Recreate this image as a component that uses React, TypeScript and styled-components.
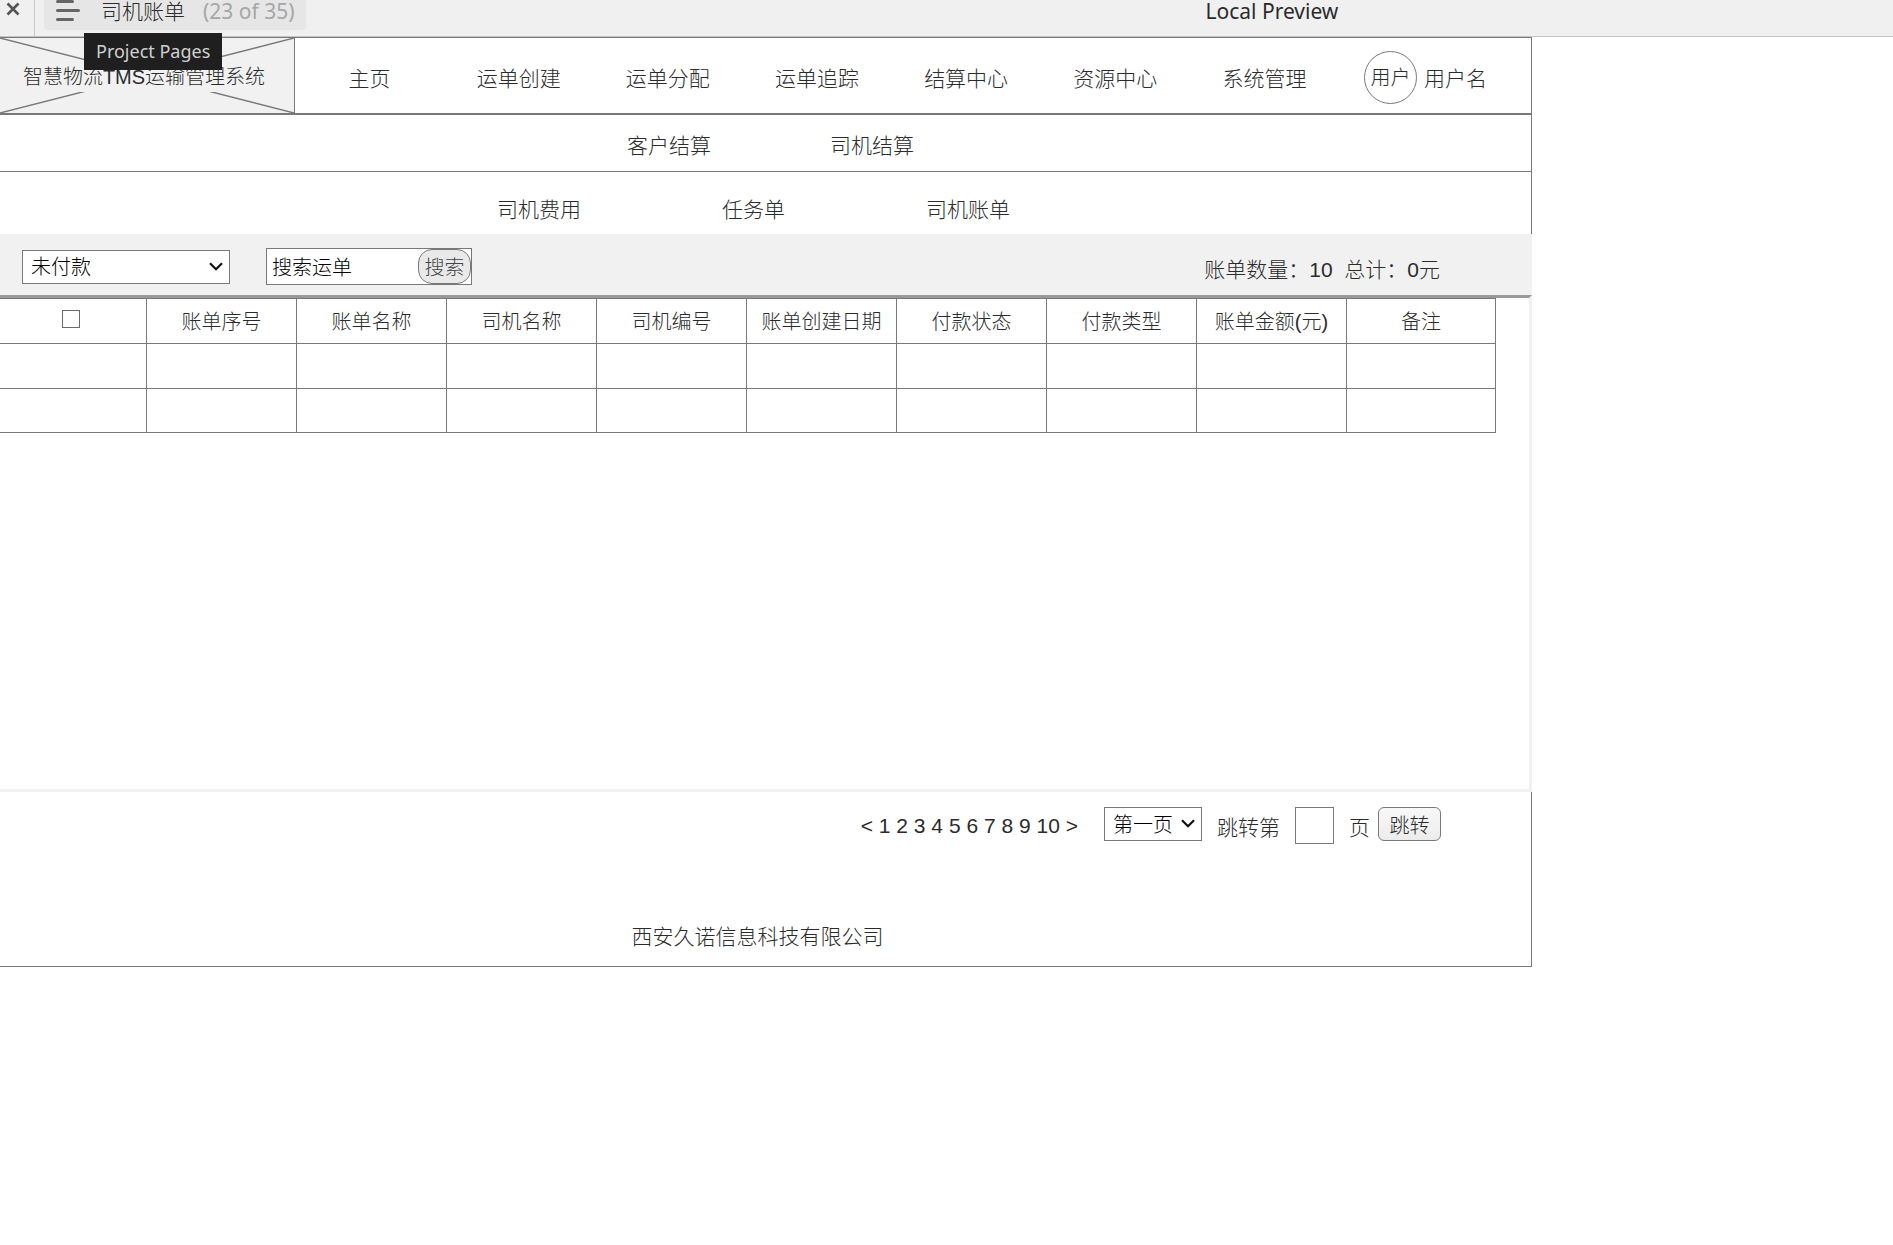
import React from "react";
import styled, { createGlobalStyle } from "styled-components";

const line = "#797979";
const ink = "#2b2b2b";
const panel = "#f1f1f1";

const GlobalStyle = createGlobalStyle`
  *, *::before, *::after { box-sizing: border-box; }
  body {
    margin: 0;
    background: #ffffff;
    color: ${ink};
    font-family: "Liberation Sans", "Noto Sans CJK SC", sans-serif;
    font-weight: 300;
    font-size: 21px;
    line-height: 30px;
  }
  a { color: inherit; text-decoration: none; }
  button, input, select { font: inherit; margin: 0; }
`;

/* Preview player bar */

const PlayerBar = styled.div`
  display: flex;
  align-items: flex-start;
  height: 37px;
  background: #f0f0f0;
  border-bottom: 1px solid #c4c4c4;
  font-family: "Noto Sans", "Noto Sans CJK SC", sans-serif;
  line-height: 22px;
`;

const CloseButton = styled.button`
  width: 35px;
  height: 36px;
  padding: 2px 0 0 6px;
  border: 0;
  border-right: 1px solid #c8c8c8;
  background: none;
  display: flex;
  align-items: flex-start;
`;

const PagesButton = styled.button`
  position: relative;
  display: flex;
  align-items: flex-start;
  height: 30px;
  margin-left: 9px;
  padding: 0 11px 0 12px;
  border: 0;
  border-radius: 0 0 4px 4px;
  background: #e6e6e6;
  color: ${ink};
  white-space: nowrap;
`;

const PageName = styled.span`
  margin-left: 20px;
`;

const PageCount = styled.span`
  margin-left: 18px;
  color: #a6a6a6;
  font-weight: 400;
`;

const Tooltip = styled.span`
  position: absolute;
  z-index: 2;
  top: 33px;
  left: 40px;
  height: 37px;
  padding: 0 12px;
  background: #1f1f1f;
  color: #d0d0d0;
  font-size: 18px;
  font-weight: 400;
  line-height: 37px;
`;

const PlayerTitle = styled.div`
  flex: 1;
  padding-left: 900px;
  font-weight: 400;
`;

/* Page frame */

const Page = styled.div`
  max-width: 1532px;
`;

const Header = styled.header`
  display: flex;
  height: 78px;
  border: solid ${line};
  border-width: 1px 1px 2px 0;
`;

const Logo = styled.div`
  position: relative;
  display: flex;
  align-items: center;
  justify-content: center;
  flex: 0 0 295px;
  padding: 2px 6px 0 0;
  background: ${panel};
  border-right: 1px solid ${line};
`;

const LogoCross = styled.svg`
  position: absolute;
  inset: 0;
  width: 100%;
  height: 100%;
`;

const LogoText = styled.h1`
  position: relative;
  margin: 0;
  background: ${panel};
  font-size: 20px;
  font-weight: 300;
  line-height: 30px;
  white-space: nowrap;
`;

const MainNav = styled.nav`
  display: grid;
  grid-template-columns: repeat(7, 1fr);
  flex: 1;
  align-items: center;
  padding: 6px 2px 0 0;
  text-align: center;
  white-space: nowrap;
`;

const User = styled.div`
  display: flex;
  align-items: center;
  flex: 0 0 190px;
  gap: 7px;
  padding: 3px 0 0 23px;
  white-space: nowrap;
`;

const Avatar = styled.span`
  display: flex;
  align-items: center;
  justify-content: center;
  width: 53px;
  height: 53px;
  padding-top: 2px;
  border: 1px solid ${line};
  border-radius: 50%;
  font-size: 20px;
`;

const UserName = styled.span`
  padding-top: 3px;
`;

const SubNav = styled.nav<{ $level: 2 | 3 }>`
  display: flex;
  justify-content: center;
  gap: ${(p) => (p.$level === 2 ? 119 : 141)}px;
  padding: ${(p) => (p.$level === 2 ? "16px 0 10px 10px" : "23px 24px 9px 0")};
  border-right: 1px solid ${line};
  border-bottom: ${(p) => (p.$level === 2 ? `1px solid ${line}` : "0")};
`;

const FilterBar = styled.form`
  display: flex;
  align-items: center;
  height: 61px;
  padding: 4px 92px 0 22px;
  background: ${panel};
`;

const SelectBox = styled.span<{ $width: number }>`
  position: relative;
  display: flex;
  width: ${(p) => p.$width}px;
  height: 34px;
`;

const Select = styled.select`
  width: 100%;
  padding: 1px 8px 0;
  border: 1px solid ${line};
  border-radius: 0;
  background: #ffffff;
  color: #000000;
  font-size: 20px;
  line-height: 30px;
  appearance: none;
`;

const Chevron = styled.svg`
  position: absolute;
  top: 12px;
  right: 7px;
  width: 14px;
  height: 9px;
  pointer-events: none;
`;

const SearchBox = styled.div`
  display: flex;
  width: 206px;
  height: 37px;
  margin-left: 36px;
  border: 1px solid ${line};
  background: #ffffff;
`;

const SearchInput = styled.input`
  flex: 1;
  min-width: 0;
  padding: 2px 5px 0;
  border: 0;
  background: none;
  color: #000000;
  font-size: 20px;
`;

const Button = styled.button<{ $round?: boolean }>`
  width: ${(p) => (p.$round ? 53 : 63)}px;
  height: ${(p) => (p.$round ? 35 : 34)}px;
  padding: 3px 0 0;
  border: 1px solid ${line};
  border-radius: ${(p) => (p.$round ? 14 : 6)}px;
  background: ${(p) => (p.$round ? "#e9e9e9" : "linear-gradient(#f8f8f8, #ececec)")};
  color: ${(p) => (p.$round ? "#444444" : ink)};
  font-size: 20px;
  line-height: 28px;
`;

const Summary = styled.p`
  margin: 0 0 0 auto;
  padding-top: 6px;
  white-space: pre;
`;

const TablePanel = styled.section`
  min-height: 497px;
  border: solid ${panel};
  border-width: 3px 3px 3px 0;
  border-top-color: #999999;
`;

const Table = styled.table`
  width: calc(100% - 33px);
  table-layout: fixed;
  border-spacing: 0;
  border-top: 1px solid ${line};
  font-size: 20px;

  th, td {
    height: 45px;
    padding: 2px 0 0;
    border: solid ${line};
    border-width: 0 1px 1px 0;
    font-weight: 300;
    text-align: center;
    white-space: nowrap;
  }
  th:first-child { width: 147px; padding: 0 4px 4px 0; }
  th:last-child { width: 149px; }
  tbody tr:last-child td { height: 44px; }
`;

const Checkbox = styled.input`
  display: block;
  width: 18px;
  height: 18px;
  margin: 0 auto;
  border: 1px solid #6b6b6b;
  background: #ffffff;
  appearance: none;

  &:checked { background: ${line}; }
`;

const Footer = styled.footer`
  height: 175px;
  border: solid ${line};
  border-width: 0 1px 1px 0;
`;

const Pager = styled.form`
  display: flex;
  align-items: flex-start;
  justify-content: flex-end;
  padding: 15px 90px 0 0;
  white-space: nowrap;
`;

const PageLinks = styled.nav`
  margin-right: 26px;
  line-height: 38px;
`;

const PageLabel = styled.label`
  display: flex;
  align-items: flex-start;
  gap: 15px;
  margin: 0 8px 0 15px;
  line-height: 42px;
`;

const PageInput = styled.input`
  width: 39px;
  height: 37px;
  padding: 0 4px;
  border: 1px solid ${line};
  background: #ffffff;
`;

const Company = styled.p`
  margin: 73px 16px 0 0;
  text-align: center;
`;

const mainMenu = ["主页", "运单创建", "运单分配", "运单追踪", "结算中心", "资源中心", "系统管理"];
const settleMenu = ["客户结算", "司机结算"];
const driverMenu = ["司机费用", "任务单", "司机账单"];
const columns = ["账单序号", "账单名称", "司机名称", "司机编号", "账单创建日期", "付款状态", "付款类型", "账单金额(元)", "备注"];
const pages = ["<", "1", "2", "3", "4", "5", "6", "7", "8", "9", "10", ">"];

const links = (items: string[]) => items.map((t) => <a href="#" key={t}>{t}</a>);

function Dropdown({ label, option, width }: { label: string; option: string; width: number }) {
  return (
    <SelectBox $width={width}>
      <Select aria-label={label}>
        <option>{option}</option>
      </Select>
      <Chevron viewBox="0 0 14 9" fill="none" stroke="#111" strokeWidth="2.2">
        <path d="M1 1.2 7 7.2 13 1.2" />
      </Chevron>
    </SelectBox>
  );
}

export default function App() {
  return (
    <>
      <GlobalStyle />
      <PlayerBar>
        <CloseButton aria-label="Close">
          <svg width="14" height="14" viewBox="0 0 14 14" stroke="#555" strokeWidth="2.6">
            <path d="M1.5 1.5 12.5 12.5M12.5 1.5 1.5 12.5" />
          </svg>
        </CloseButton>
        <PagesButton>
          <svg width="25" height="22" viewBox="0 0 25 22" stroke="#666" strokeWidth="3" strokeLinecap="round">
            <path d="M1.5 1.5H16.5M1.5 10.5H22.5M1.5 19.5H16.5" />
          </svg>
          <PageName>司机账单</PageName>
          <PageCount>(23 of 35)</PageCount>
          <Tooltip role="tooltip">Project Pages</Tooltip>
        </PagesButton>
        <PlayerTitle>Local Preview</PlayerTitle>
      </PlayerBar>

      <Page>
        <Header>
          <Logo>
            <LogoCross viewBox="0 0 294 75" preserveAspectRatio="none" stroke={line} strokeWidth="1.4">
              <path d="M0 0 294 75M0 75 294 0" />
            </LogoCross>
            <LogoText>智慧物流TMS运输管理系统</LogoText>
          </Logo>
          <MainNav>{links(mainMenu)}</MainNav>
          <User>
            <Avatar>用户</Avatar>
            <UserName>用户名</UserName>
          </User>
        </Header>

        <SubNav $level={2}>{links(settleMenu)}</SubNav>
        <SubNav $level={3}>{links(driverMenu)}</SubNav>

        <FilterBar>
          <Dropdown label="付款状态" option="未付款" width={208} />
          <SearchBox>
            <SearchInput aria-label="搜索运单" defaultValue="搜索运单" />
            <Button type="button" $round>搜索</Button>
          </SearchBox>
          <Summary>{"账单数量：10  总计：0元"}</Summary>
        </FilterBar>

        <TablePanel>
          <Table>
            <thead>
              <tr>
                <th><Checkbox type="checkbox" aria-label="全选" /></th>
                {columns.map((c) => <th key={c}>{c}</th>)}
              </tr>
            </thead>
            <tbody>
              {[0, 1].map((r) => (
                <tr key={r}>
                  <td />
                  {columns.map((c) => <td key={c} />)}
                </tr>
              ))}
            </tbody>
          </Table>
        </TablePanel>

        <Footer>
          <Pager>
            <PageLinks>
              {pages.map((p, i) => (
                <React.Fragment key={p}>
                  {i > 0 && " "}
                  <a href="#">{p}</a>
                </React.Fragment>
              ))}
            </PageLinks>
            <Dropdown label="页码" option="第一页" width={98} />
            <PageLabel>
              跳转第
              <PageInput type="text" />
              页
            </PageLabel>
            <Button type="button">跳转</Button>
          </Pager>
          <Company>西安久诺信息科技有限公司</Company>
        </Footer>
      </Page>
    </>
  );
}
